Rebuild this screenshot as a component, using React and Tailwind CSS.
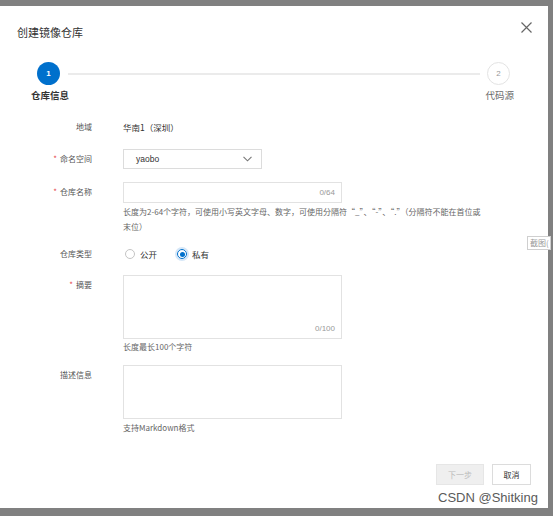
import React from "react";

const cjk = { fontFamily: '"Noto Sans CJK SC", "Noto Sans", sans-serif' };

function Label({ children, required }) {
  return (
    <div className="w-[92px] h-[20px] flex items-center justify-end text-[8px] text-[#555] shrink-0">
      {required && <span className="text-[#e5484d] mr-[3px]">*</span>}
      {children}
    </div>
  );
}

function Radio({ checked, children }) {
  return (
    <div className="flex items-center gap-[5px]">
      {checked ? (
        <span className="w-[10px] h-[10px] rounded-full border border-[#0070cc] flex items-center justify-center ring-2 ring-[#d6e7f8]">
          <span className="w-[5px] h-[5px] rounded-full bg-[#0070cc]" />
        </span>
      ) : (
        <span className="w-[10px] h-[10px] rounded-full border border-[#c4c4c4] bg-white" />
      )}
      <span className="text-[8.5px] text-[#333]">{children}</span>
    </div>
  );
}

export default function App() {
  return (
    <div className="relative w-[553px] h-[516px] bg-[#808080] pt-[6px] overflow-hidden" style={cjk}>
      <div className="relative w-[548px] h-[502px] bg-white">
        {/* header */}
        <div className="pt-[18px] pl-[17px] h-[34px] text-[11px] leading-[16px] text-[#333]">创建镜像仓库</div>
        <button className="absolute left-[520px] top-[15px] w-[12px] h-[12px] flex items-center justify-center">
          <svg width="11" height="11" viewBox="0 0 11 11" fill="none" stroke="#666" strokeWidth="1.2">
            <path d="M0.5 0.5 L10.5 10.5 M10.5 0.5 L0.5 10.5" />
          </svg>
        </button>

        {/* steps */}
        <div className="mt-[22px] flex items-center pl-[37px] pr-[38px]">
          <div className="w-[23px] h-[23px] rounded-full bg-[#0070cc] flex items-center justify-center text-white text-[8px] font-bold shrink-0" style={{ fontFamily: '"Liberation Sans", sans-serif' }}>1</div>
          <div className="flex-1 h-[2px] bg-[#ebebeb] ml-[8px] mr-[7px]" />
          <div className="w-[23px] h-[23px] rounded-full border-[1.5px] border-[#e3e3e3] flex items-center justify-center text-[#999] text-[8px] shrink-0" style={{ fontFamily: '"Liberation Sans", sans-serif' }}>2</div>
        </div>
        <div className="mt-[3px] flex justify-between pl-[31px] pr-[34px] text-[9.5px] leading-[14px]">
          <span className="font-bold text-[#333]">仓库信息</span>
          <span className="text-[#666]">代码源</span>
        </div>

        {/* form */}
        <div className="mt-[15px] flex flex-col">
          <div className="flex items-start gap-[31px]">
            <Label>地域</Label>
            <div className="h-[20px] flex items-center text-[8.5px] text-[#333]">华南1（深圳）</div>
          </div>

          <div className="mt-[12px] flex items-start gap-[31px]">
            <Label required>命名空间</Label>
            <div className="w-[139px] h-[20px] border border-[#dcdcdc] flex items-center justify-between pl-[12px] pr-[9px]">
              <span className="text-[8.5px] text-[#333]" style={{ fontFamily: '"Liberation Sans", sans-serif' }}>yaobo</span>
              <svg width="9" height="6" viewBox="0 0 9 6" fill="none" stroke="#777" strokeWidth="1.1">
                <path d="M0.5 0.8 L4.5 4.8 L8.5 0.8" />
              </svg>
            </div>
          </div>

          <div className="mt-[13px] flex items-start gap-[31px]">
            <Label required>仓库名称</Label>
            <div className="flex flex-col">
              <div className="w-[219px] h-[21px] border border-[#e2e2e2] flex items-center justify-end pr-[6px]">
                <span className="text-[8px] text-[#999]" style={{ fontFamily: '"Liberation Sans", sans-serif' }}>0/64</span>
              </div>
              <div className="mt-[1px] text-[8px] leading-[15px] text-[#666] whitespace-nowrap">
                <div>长度为2-64个字符，可使用小写英文字母、数字，可使用分隔符“_”、“-”、“.”（分隔符不能在首位或</div>
                <div>末位）</div>
              </div>
            </div>
          </div>

          <div className="mt-[10px] flex items-start gap-[31px]">
            <Label>仓库类型</Label>
            <div className="h-[20px] flex items-center gap-[20px] pl-[2px]">
              <Radio>公开</Radio>
              <Radio checked>私有</Radio>
            </div>
          </div>

          <div className="mt-[11px] flex items-start gap-[31px]">
            <Label required>摘要</Label>
            <div className="flex flex-col">
              <div className="w-[219px] h-[64px] border border-[#e2e2e2] flex items-end justify-end pr-[6px] pb-[3px]">
                <span className="text-[8px] text-[#999]" style={{ fontFamily: '"Liberation Sans", sans-serif' }}>0/100</span>
              </div>
              <div className="mt-[1px] text-[8px] leading-[14px] text-[#666]">长度最长100个字符</div>
            </div>
          </div>

          <div className="mt-[11px] flex items-start gap-[31px]">
            <Label>描述信息</Label>
            <div className="flex flex-col">
              <div className="w-[219px] h-[54px] border border-[#e2e2e2]" />
              <div className="mt-[2px] text-[8px] leading-[14px] text-[#666]">支持Markdown格式</div>
            </div>
          </div>

          <div className="mt-[29px] flex justify-end gap-[8px] pr-[17px]">
            <div className="w-[48px] h-[21px] bg-[#efefef] border border-[#e6e6e6] flex items-center justify-center text-[8px] text-[#bbb]">下一步</div>
            <div className="w-[39px] h-[21px] bg-white border border-[#dcdcdc] flex items-center justify-center text-[8px] text-[#333]">取消</div>
          </div>
        </div>
      </div>

      {/* watermark */}
      <div className="absolute left-[438px] top-[490px] text-[13px] leading-[16px] text-[#5a5a5a]" style={{ fontFamily: '"Liberation Sans", Arial, sans-serif' }}>CSDN @Shitking</div>

      {/* screenshot tooltip */}
      <div className="absolute left-[527px] top-[236px] h-[14px] pl-[2px] pr-[1px] bg-white border border-[#cfcfcf] text-[8px] leading-[12px] text-[#999] whitespace-nowrap">截图(</div>
    </div>
  );
}
